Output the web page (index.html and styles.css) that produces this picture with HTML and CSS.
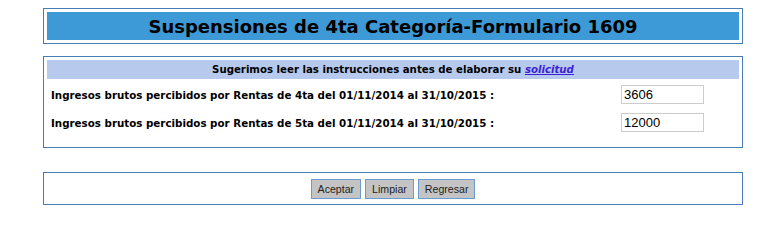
FILE: index.html
```html
<!DOCTYPE html>
<html lang="es">
<head>
<meta charset="utf-8">
<title>Suspensiones de 4ta Categoría-Formulario 1609</title>
<link rel="stylesheet" href="styles.css">
</head>
<body>
<div class="page">
  <div class="box title-box">
    <h1 class="title">Suspensiones de 4ta Categoría-Formulario 1609</h1>
  </div>
  <div class="box form-box">
    <div class="notice">Sugerimos leer las instrucciones antes de elaborar su <a href="#" class="link">solicitud</a></div>
    <div class="row">
      <label class="label" for="r4">Ingresos brutos percibidos por Rentas de 4ta del 01/11/2014 al 31/10/2015 :</label>
      <div class="field"><input id="r4" class="input" type="text" value="3606"></div>
    </div>
    <div class="row">
      <label class="label" for="r5">Ingresos brutos percibidos por Rentas de 5ta del 01/11/2014 al 31/10/2015 :</label>
      <div class="field"><input id="r5" class="input" type="text" value="12000"></div>
    </div>
  </div>
  <div class="box actions">
    <button class="btn" type="button">Aceptar</button>
    <button class="btn" type="button">Limpiar</button>
    <button class="btn" type="button">Regresar</button>
  </div>
</div>
</body>
</html>
```

FILE: styles.css
```css
html, body {
  margin: 0;
  padding: 0;
  background: #ffffff;
}

.page {
  padding-top: 8px;
  margin-left: 43px;
  width: 700px;
  font-family: "DejaVu Sans", Verdana, sans-serif;
}

.box {
  box-sizing: border-box;
  width: 700px;
  border: 1px solid #4a7db8;
  padding: 3px;
}

.title-box {
  height: 36px;
}

.title {
  margin: 0;
  height: 28px;
  background: #3d9ad6;
  color: #000000;
  font-size: 18px;
  font-weight: bold;
  line-height: 29px;
  text-align: center;
}

.form-box {
  margin-top: 12px;
  height: 92px;
  display: flex;
  flex-direction: column;
  gap: 3px;
}

.notice {
  height: 19px;
  line-height: 19px;
  background: #b7caee;
  font-size: 10.2px;
  font-weight: bold;
  text-align: center;
  color: #000000;
}

.link {
  color: #3b1fd6;
  font-style: italic;
  text-decoration: underline;
}

.row {
  height: 25px;
  display: grid;
  grid-template-columns: 1fr 118px;
  align-items: center;
}

.label {
  padding-left: 4px;
  font-size: 10.3px;
  font-weight: bold;
  color: #000000;
}

.input {
  box-sizing: border-box;
  display: block;
  width: 83px;
  height: 19px;
  margin: 0;
  padding: 0 2px;
  border: 1px solid #cccccc;
  font-family: "Liberation Sans", Arial, sans-serif;
  font-size: 13px;
  color: #000000;
  background: #ffffff;
}

.actions {
  margin-top: 24px;
  height: 33px;
  display: flex;
  justify-content: center;
  align-items: center;
  gap: 4px;
  padding: 0;
}

.btn {
  box-sizing: border-box;
  height: 20px;
  margin: 0;
  padding: 0 6px;
  background: #c4c4c4;
  border: 1px solid #6c9bd2;
  border-radius: 0;
  font-family: "Liberation Sans", Arial, sans-serif;
  font-size: 10.6px;
  color: #222222;
}
```
